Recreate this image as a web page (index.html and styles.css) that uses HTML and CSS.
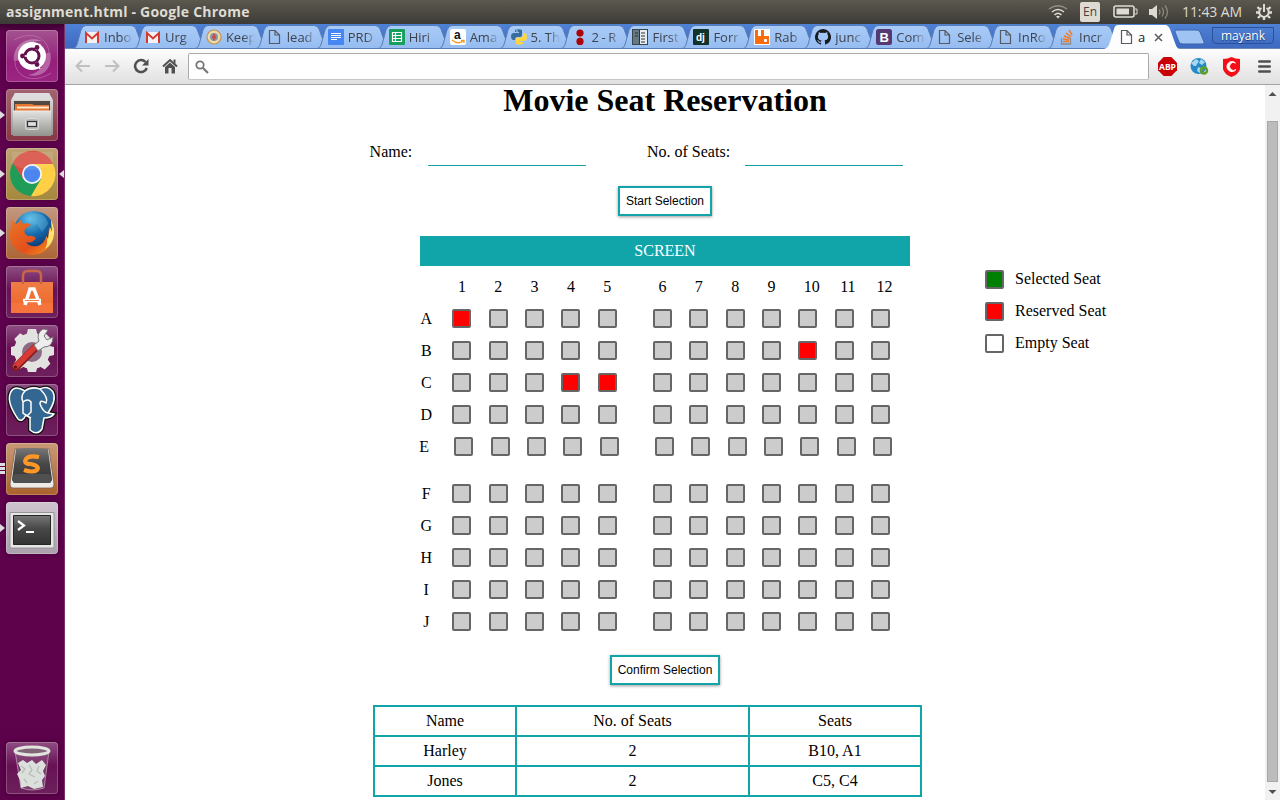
FILE: index.html
```html
<!DOCTYPE html>
<html lang="en">
<head>
<meta charset="utf-8">
<title>assignment.html</title>
<link rel="stylesheet" href="styles.css">
</head>
<body>
<svg class="defs" width="0" height="0">
  <defs>
    <linearGradient id="tabfill" x1="0" y1="0" x2="0" y2="1"><stop offset="0" stop-color="#a9cbf8"/><stop offset="1" stop-color="#96bcf0"/></linearGradient>
    <linearGradient id="metal" x1="0" y1="0" x2="0" y2="1"><stop offset="0" stop-color="#e2e2e0"/><stop offset="1" stop-color="#92928e"/></linearGradient>
    <linearGradient id="dark" x1="0" y1="0" x2="0" y2="1"><stop offset="0" stop-color="#777"/><stop offset=".45" stop-color="#484848"/><stop offset="1" stop-color="#333"/></linearGradient>
    <linearGradient id="bag" x1="0" y1="0" x2="0" y2="1"><stop offset="0" stop-color="#ee7d43"/><stop offset="1" stop-color="#ee642a"/></linearGradient>
    <radialGradient id="fox" cx=".4" cy=".2" r=".8"><stop offset="0" stop-color="#65c4ec"/><stop offset=".5" stop-color="#176bac"/><stop offset="1" stop-color="#0d2c68"/></radialGradient>
    <linearGradient id="flame" x1="0" y1="0" x2="1" y2="1"><stop offset="0" stop-color="#e87428"/><stop offset=".6" stop-color="#e4501a"/><stop offset="1" stop-color="#f39b22"/></linearGradient>
    <symbol id="tab" viewBox="0 0 74 25"><path d="M0 24.5C3 24 3.500 22 4.500 19L8 6Q9.500 1.500 13 1.500H58Q61.500 1.500 63 5L68.500 20Q70 24 73 24.500Z" fill="url(#tabfill)" stroke="#587db5" /></symbol>
    <symbol id="page" viewBox="0 0 16 16"><path d="M2.500 1.500H8L12.500 6V14.500H2.500ZM8 1.500V6H12.500" fill="none" stroke="#565b62" stroke-width="1.200"/></symbol>
    <symbol id="gmail" viewBox="0 0 16 16"><path d="M1 3H15V14H1Z" fill="#f2f2f2"/><path d="M2 14V4L8 9.500L14 4V14" fill="none" stroke="#d43a2f" stroke-width="2"/></symbol>
  </defs>
</svg>
<header class="panel">
  <span class="panel-title">assignment.html - Google Chrome</span>
  <div class="indicators">
    <svg class="wifi" width="20" height="14" viewBox="0 0 20 14" fill="none" stroke="#dfdbd2" stroke-width="1.500"><path d="M1 4Q10-2.500 19 4" stroke="#948f84"/><path d="M4 7Q10 2 16 7M6.500 10Q10 6.500 13.500 10"/><path d="M8 11.500Q10 10 12 11.500L10 13.500Z" fill="#dfdbd2" stroke="none"/></svg>
    <span class="lang">En</span>
    <svg class="battery" width="25" height="14" viewBox="0 0 25 14"><rect x="1" y="1" width="20" height="11" rx="2" fill="none" stroke="#dfdbd2" stroke-width="1.600"/><path d="M3.500 3.500H16V9.500H3.500Z" fill="#dfdbd2"/><path d="M22 4H24V9H22" fill="none" stroke="#dfdbd2"/></svg>
    <svg class="sound" width="20" height="16" viewBox="0 0 20 16"><path d="M0 5H3L8 1V15L3 11H0Z" fill="#dfdbd2"/><path d="M10 5.500Q12 8 10 10.500M13 3.500Q16 8 13 12.500M16 1.500Q21 8 16 14.500" fill="none" stroke="#8d887e" stroke-width="1.300"/></svg>
    <span class="clock">11:43 AM</span>
    <svg class="gear" width="16" height="16" viewBox="0 0 16 16" fill="none" stroke="#dfdbd2"><path d="M5.500 4A4.800 4.800 0 1 0 10.500 4" stroke-width="2"/><path d="M8 0V8" stroke-width="2"/><path d="M3.500 5L1.500 3M3 8.500H0M4 12L2 14M8 13V16M12 12L14 14M13 8.500H16M12.500 5L14.500 3" stroke-width="2.400"/></svg>
  </div>
</header>
<div class="desktop">
  <nav class="launcher">
    <div class="tile ubuntu"><svg viewBox="0 0 52 52"><path d="M8 31C6 15 22 5 36 11C24 10 14 18 15 30M44 22C48 38 36 49 22 45C34 43 41 34 39 24" fill="#fff" opacity=".3"/><path d="M9 31C9 48 28 54 45 43M43 22C41 6 24 1 8 10" fill="none" stroke="#c98bb8" opacity=".5"/><circle cx="26" cy="26" r="14" fill="#fff"/><circle cx="26" cy="26" r="7" fill="none" stroke="#65104e" stroke-width="3"/><g stroke="#fff" stroke-width="1.500"><path d="M14 26H21M30 20L34 14M30 32L34 39"/></g><g fill="#65104e"><circle cx="16.500" cy="26" r="2.400"/><circle cx="31" cy="17.500" r="2.400"/><circle cx="31" cy="34.500" r="2.400"/></g></svg></div>
    <div class="tile files run"><svg viewBox="0 0 52 52"><path d="M9 4H43L47 11V46H5V11Z" fill="url(#metal)"/><path d="M9 4H43L46 11H6Z" fill="#ddd"/><path d="M8 12H44V22H8Z" fill="#514a44"/><path d="M9 15H26L28 16H43V22H9Z" fill="#e57830"/><path d="M11 17.500H43V19.500H11Z" fill="#ffe7cc"/><path d="M7 22H45V47H7Z" fill="url(#metal)"/><path d="M7 22H45" stroke="#eee"/><rect x="19.500" y="29.500" width="13" height="11" rx="2" fill="#b8b8b6" stroke="#dcdcdb"/><rect x="21.500" y="32.500" width="9" height="5" fill="#ddd" stroke="#333" stroke-width="1.200"/></svg></div>
    <div class="tile chrome run active"><svg viewBox="0 0 52 52"><circle cx="26" cy="26" r="22" fill="#1f9d58"/><path d="M26 16H47A22 22 0 0 1 25 48L35 31Z" fill="#ffcf45"/><path d="M7 15L17 31L25 16H47A22 22 0 0 0 7 15Z" fill="#d95044"/><circle cx="26" cy="26" r="10" fill="#f4f4f4"/><circle cx="26" cy="26" r="8.200" fill="#4b86ee"/><path d="M6 15Q22 28 47 16V4H6Z" fill="#fff" opacity=".1"/></svg></div>
    <div class="tile firefox run"><svg viewBox="0 0 52 52"><circle cx="28" cy="24" r="20" fill="url(#fox)"/><path d="M25 7C34 5 41 9 42 17L36 25L31 17L27 18Z" fill="#67b9dc" opacity=".4"/><path d="M6 13L10 17L15 13L17 17Q23 15 25 18L19 22Q17 26 22 29Q27 28 30 31Q26 37 20 35C24 42 38 41 40 29L42 32L43 20L46 25L45 13C52 26 46 47 27 48C11 48 0 35 5 21Z" fill="url(#flame)"/><path d="M40 29L42 32L44 20L46 25L45 13C51 24 48 37 39 42Q43 35 40 29" fill="#ffe36a"/></svg></div>
    <div class="tile store"><svg viewBox="0 0 52 52"><path d="M5 16H47V47H5Z" fill="url(#bag)"/><path d="M17 18V10Q17 5 22 5H31Q35 5 35 10V18" fill="none" stroke="#c86748" stroke-width="2.500"/><path d="M5 37H47V47H5Z" fill="#f4743c"/><path d="M19 39L24 23H28L34 39M17 34.500H35" fill="none" stroke="#fff" stroke-width="3.500"/><path d="M19 34.500H33" stroke="#f37a44"/></svg></div>
    <div class="tile settings"><svg viewBox="0 0 52 52"><g fill="#e2e2e0"><circle cx="26" cy="26" r="18"/><path d="M22 4H30L32 12H20ZM22 47H30L32 40H20Z"/><path d="M22 4H30L32 12H20ZM22 47H30L32 40H20Z" transform="rotate(45 26 26)"/><path d="M22 4H30L32 12H20ZM22 47H30L32 40H20Z" transform="rotate(90 26 26)"/><path d="M22 4H30L32 12H20ZM22 47H30L32 40H20Z" transform="rotate(135 26 26)"/></g><circle cx="26" cy="27" r="10" fill="#8d6b86"/><path d="M10 42L29 23" stroke="#861d20" stroke-width="8" stroke-linecap="round"/><path d="M10 41L29 22" stroke="#d73a32" stroke-width="6" stroke-linecap="round"/><path d="M28 20L33 16Q30 8 37 4L42 5L38 11L41 15L47 12Q47 22 38 22L32 26Z" fill="#eee" stroke="#777"/><circle cx="9.500" cy="42" r="1.600" fill="#5b1015"/></svg></div>
    <div class="tile postgres"><svg viewBox="0 0 52 52"><path d="M19 7Q7 0 4 10Q1 19 12 35Q16 39 20 31L24 34V46Q31 52 36 45L38 34Q45 34 48 30L42 29Q51 16 47 8Q42 1 34 5Q25 2 19 7Z" fill="#336791" stroke="#111" stroke-width="4"/><path d="M19 7Q7 0 4 10Q1 19 12 35Q16 39 20 31L24 34V46Q31 52 36 45L38 34Q45 34 48 30L42 29Q51 16 47 8Q42 1 34 5Q25 2 19 7ZM19 7Q14 12 17 18V29L21 32M17 18Q22 14 25 18V28L21 32L25 34M34 5Q43 14 40 19Q34 15 34 20Q37 28 42 29" fill="#336791" stroke="#fff" stroke-width="1.500"/></svg></div>
    <div class="tile sublime run multi"><svg viewBox="0 0 52 52"><path d="M9 6H43L48 41Q48 45 45 45H7Q4 45 4 41Z" fill="#ece9e7" stroke="#77604f" stroke-width=".8"/><path d="M10 6Q26 4 42 6L46 37L44 40H8L6 37Z" fill="url(#dark)"/><path d="M6 35L9 31H43L46 35L44 40H8Z" fill="#505050"/><path d="M33 14Q23 12 20 16Q17 21 25 21Q34 23 31 27Q27 30 18 27" fill="none" stroke="#ff9826" stroke-width="4.200"/></svg></div>
    <div class="tile terminal run"><svg viewBox="0 0 52 52"><path d="M4 10.500H48V46H4Z" fill="#e7e6e7" stroke="#989398"/><path d="M7.500 13.500H44.500V42.500H7.500Z" fill="url(#dark)" stroke="#252525"/><path d="M12 19L18 23.500L12 28M20 30H28" fill="none" stroke="#fff" stroke-width="2.200"/></svg></div>
    <div class="tile trash"><svg viewBox="0 0 52 52"><path d="M9 9L15 46Q26 50 38 46L43 9" fill="#9d7495" fill-opacity=".35" stroke="#a98aa1"/><path d="M12 21L17 18L21 21L26 18L30 22L36 18L40 23L37 29L39 34L36 38L37 45L28 47L22 44L15 46L14 38L11 32L15 28Z" fill="#dce0dc"/><path d="M15 24L19 27L16 31M23 23L26 28L23 32L29 35M33 24L31 29L35 32M18 37L21 41M32 39L28 42" fill="none" stroke="#b9beb7" stroke-width="1.300"/><ellipse cx="26" cy="9" rx="17" ry="4" fill="#806578" stroke="#e2e4de" stroke-width="3"/></svg></div>
  </nav>
  <div class="browser">
    <div class="tabs">
      <div class="tab"><svg class="shape"><use href="#tab"/></svg><svg class="fav"><use href="#gmail"/></svg><span>Inbo</span></div>
      <div class="tab"><svg class="shape"><use href="#tab"/></svg><svg class="fav"><use href="#gmail"/></svg><span>Urg</span></div>
      <div class="tab"><svg class="shape"><use href="#tab"/></svg><svg class="fav" viewBox="0 0 16 16"><circle cx="8" cy="8" r="7" fill="#eedbab" stroke="#c4924b" stroke-width="1.200"/><circle cx="8" cy="8" r="4" fill="#8796a9"/><path d="M8 4L10 8L8 12L6 8Z" fill="#ce4a40"/></svg><span>Keep</span></div>
      <div class="tab"><svg class="shape"><use href="#tab"/></svg><svg class="fav"><use href="#page"/></svg><span>lead</span></div>
      <div class="tab"><svg class="shape"><use href="#tab"/></svg><svg class="fav" viewBox="0 0 16 16"><rect width="16" height="16" rx="1" fill="#4687f3"/><path d="M3 4.500H13M3 6.500H13M3 8.500H13M3 10.500H9" stroke="#fff"/></svg><span>PRD</span></div>
      <div class="tab"><svg class="shape"><use href="#tab"/></svg><svg class="fav" viewBox="0 0 16 16"><rect width="16" height="16" rx="1" fill="#16a05c"/><path d="M3.500 3.500H12.500V12.500H3.500ZM3.500 6.500H12.500M3.500 9.500H12.500M6.500 3.500V12.500" fill="none" stroke="#fff" stroke-width="1.200"/></svg><span>Hiri</span></div>
      <div class="tab"><svg class="shape"><use href="#tab"/></svg><svg class="fav" viewBox="0 0 16 16"><rect width="16" height="16" rx="2" fill="#fff"/><text x="4" y="10" class="amazon">a</text><path d="M2 11Q8 16 13 12M11 11.500H14V14" fill="none" stroke="#f49b20" stroke-width="1.300"/></svg><span>Ama</span></div>
      <div class="tab"><svg class="shape"><use href="#tab"/></svg><svg class="fav" viewBox="0 0 16 16"><path d="M4 1Q8-.5 11 1V6Q11 8 9 8H6Q4 8 4 11H2Q0 10 0 7.500Q0 4 3 4H8V3H4Z" fill="#366f9f"/><path d="M12 4H14Q16 5 16 8Q16 12 13 12H8V13H12V15Q8 16.500 5 15V10Q5 8.500 7 8.500H10Q12 8 12 6Z" fill="#ffd540"/><circle cx="6" cy="2" r=".7" fill="#fff"/></svg><span>5. Th</span></div>
      <div class="tab"><svg class="shape"><use href="#tab"/></svg><svg class="fav" viewBox="0 0 16 16"><path d="M8 4V12" stroke="#c78c9f" stroke-width="2"/><circle cx="8" cy="4" r="3.600" fill="#aa0308"/><circle cx="8" cy="12.400" r="3.600" fill="#aa0308"/></svg><span class="tight">2 - R</span></div>
      <div class="tab"><svg class="shape"><use href="#tab"/></svg><svg class="fav" viewBox="0 0 16 16"><rect x=".5" y=".5" width="15" height="15" fill="#657982" stroke="#39464c"/><path d="M8 1H15V15H8Z" fill="#e8edef"/><path d="M3 4H6M3 7H6M9 4H13M9 7H13M9 10H13M9 13H13" stroke="#26343b" stroke-width="1.200"/><path d="M7.500 1V15" stroke="#263238"/></svg><span>First</span></div>
      <div class="tab"><svg class="shape"><use href="#tab"/></svg><svg class="fav" viewBox="0 0 16 16"><rect width="16" height="16" rx="1" fill="#10332b"/><text x="3" y="11.500" class="django">dj</text></svg><span>Forr</span></div>
      <div class="tab"><svg class="shape"><use href="#tab"/></svg><svg class="fav" viewBox="0 0 16 16"><rect width="16" height="16" fill="#fff"/><path d="M1 1H4V7H7V1H10V7H15V15H1Z" fill="#f96b0b"/><rect x="10" y="10" width="3" height="3" rx="1" fill="#fff"/></svg><span>Rab</span></div>
      <div class="tab"><svg class="shape"><use href="#tab"/></svg><svg class="fav" viewBox="0 0 16 16"><path fill="#171c22" d="M8 0a8 8 0 0 0-2.530 15.590c.4.070.55-.170.55-.380V13.700c-2.230.480-2.700-1.070-2.700-1.070-.360-.920-.890-1.170-.890-1.170-.730-.5.050-.490.050-.490.810.060 1.230.830 1.230.830.720 1.230 1.880.870 2.340.670.070-.520.280-.870.510-1.070C4.780 11.200 2.920 10.500 2.920 7.440c0-.870.310-1.590.820-2.150-.080-.2-.360-1.020.080-2.120 0 0 .670-.220 2.200.820a7.600 7.600 0 0 1 4 0c1.530-1.040 2.200-.820 2.200-.820.440 1.100.160 1.920.080 2.120.510.560.820 1.280.820 2.150 0 3.070-1.870 3.750-3.650 3.950.290.250.540.730.540 1.480v2.340c0 .210.150.460.550.380A8 8 0 0 0 8 0Z"/></svg><span>junc</span></div>
      <div class="tab"><svg class="shape"><use href="#tab"/></svg><svg class="fav" viewBox="0 0 16 16"><rect width="16" height="16" rx="2.500" fill="#563873"/><text x="3.500" y="12.500" class="bootstrap">B</text></svg><span>Com</span></div>
      <div class="tab"><svg class="shape"><use href="#tab"/></svg><svg class="fav"><use href="#page"/></svg><span>Sele</span></div>
      <div class="tab"><svg class="shape"><use href="#tab"/></svg><svg class="fav"><use href="#page"/></svg><span>InRo</span></div>
      <div class="tab"><svg class="shape"><use href="#tab"/></svg><svg class="fav" viewBox="0 0 16 16"><path d="M2.500 9V15H11.500V9" fill="none" stroke="#8b8d90" stroke-width="1.300"/><path d="M4 12.500H10M4 10L10 11M5 7L11 9.500M7 4L12 8M10 1L13 6" stroke="#f17b27" stroke-width="1.500"/></svg><span>Incr</span></div>
      <div class="tab current"><svg class="shape" viewBox="0 0 76 25"><path d="M0 25C4 24 5 21 6 18L10 5Q11 1 14 1H61Q64 1 66 5L71 19Q73 25 76 25Z" fill="#fdfdfe"/></svg><svg class="fav"><use href="#page"/></svg><span>a</span><svg class="close" viewBox="0 0 9 9"><path d="M1 1L8 8M8 1L1 8" stroke="#5d5d5d" stroke-width="1.500"/></svg></div>
      <svg class="newtab" viewBox="0 0 32 16"><path d="M1 3Q0 1 3 1H22Q25 1 26 3L30 13Q31 15 28 15H9Q6 15 5 13Z" fill="#9fc4f3" stroke="#3c65ac"/></svg>
      <div class="profile">mayank</div>
    </div>
    <div class="toolbar">
      <svg class="nav-icon" viewBox="0 0 16 16"><path d="M15 8H2M7 2.500L1.500 8L7 13.500" fill="none" stroke="#c0c0c0" stroke-width="2"/></svg>
      <svg class="nav-icon" viewBox="0 0 16 16"><path d="M1 8H14M9 2.500L14.500 8L9 13.500" fill="none" stroke="#c0c0c0" stroke-width="2"/></svg>
      <svg class="nav-icon" viewBox="0 0 16 16"><path d="M12.500 4A6 6 0 1 0 13.800 10" fill="none" stroke="#505050" stroke-width="2.500"/><path d="M15.500 1V7.500H9Z" fill="#505050"/></svg>
      <svg class="nav-icon" viewBox="0 0 16 16"><path d="M1 8.500L8 2L15 8.500" fill="none" stroke="#505050" stroke-width="2"/><path d="M11.500 1.500H13.500V6L11.500 4ZM3 9L8 4.500L13 9V15.500H9.500V10H6.500V15.500H3Z" fill="#505050"/></svg>
      <div class="omnibox"><svg viewBox="0 0 14 14"><circle cx="5" cy="5" r="3.700" fill="none" stroke="#777" stroke-width="1.800"/><path d="M8 8L13 13" stroke="#777" stroke-width="2.200"/></svg></div>
      <div class="extensions">
        <svg class="abp" viewBox="0 0 20 20"><path d="M6 0H14L20 6V14L14 20H6L0 14V6Z" fill="#c90006"/><text x="10" y="13.200" class="abp-text">ABP</text></svg>
        <svg class="globe" viewBox="0 0 19 17"><circle cx="8.500" cy="8" r="8" fill="#2689c7"/><path d="M1 5L6 1L9 3L6 8L4 8ZM8 9L13 11L10 15L7 13ZM11 1L15 4L12 7L9 5Z" fill="#a4d8f0"/><circle cx="14" cy="12.500" r="3" fill="none" stroke="#5f9e24" stroke-width="2.500"/><path d="M10 9H14V13Z" fill="#5f9e24"/></svg>
        <svg class="shield" viewBox="0 0 17 20"><path d="M0 2Q5 2 8.500 0Q12 2 17 2V12Q16 17 8.500 20Q1 17 0 12Z" fill="#f50e16"/><path d="M12.500 6A5 5 0 1 0 13 12.500A4 4 0 1 1 12.500 6" fill="#fff" stroke="#fff" stroke-width="1"/></svg>
        <svg class="menu" viewBox="0 0 13 13"><path d="M1.200 1.500H11.800M1.200 6.500H11.800M1.200 11.500H11.800" stroke="#505050" stroke-width="2.400" stroke-linecap="round"/></svg>
      </div>
    </div>
    <div class="viewport">
      <main>
        <h1>Movie Seat Reservation</h1>
        <div class="form"><label class="name">Name:</label><span class="field"></span><label class="count">No. of Seats:</label><span class="field"></span></div>
        <div class="button start">Start Selection</div>
        <div class="hall">
          <div class="seating">
            <div class="screen">SCREEN</div>
            <div class="row numbers"><b></b><span>1</span><span>2</span><span>3</span><span>4</span><span>5</span><em></em><span>6</span><span>7</span><span>8</span><span>9</span><span>10</span><span>11</span><span>12</span></div>
            <div class="row"><b>A</b><i class="reserved"></i><i></i><i></i><i></i><i></i><em></em><i></i><i></i><i></i><i></i><i></i><i></i><i></i></div>
            <div class="row"><b>B</b><i></i><i></i><i></i><i></i><i></i><em></em><i></i><i></i><i></i><i></i><i class="reserved"></i><i></i><i></i></div>
            <div class="row"><b>C</b><i></i><i></i><i></i><i class="reserved"></i><i class="reserved"></i><em></em><i></i><i></i><i></i><i></i><i></i><i></i><i></i></div>
            <div class="row"><b>D</b><i></i><i></i><i></i><i></i><i></i><em></em><i></i><i></i><i></i><i></i><i></i><i></i><i></i></div>
            <div class="row wide"><b>E</b><i></i><i></i><i></i><i></i><i></i><em></em><i></i><i></i><i></i><i></i><i></i><i></i><i></i></div>
            <div class="row"><b>F</b><i></i><i></i><i></i><i></i><i></i><em></em><i></i><i></i><i></i><i></i><i></i><i></i><i></i></div>
            <div class="row"><b>G</b><i></i><i></i><i></i><i></i><i></i><em></em><i></i><i></i><i></i><i></i><i></i><i></i><i></i></div>
            <div class="row"><b>H</b><i></i><i></i><i></i><i></i><i></i><em></em><i></i><i></i><i></i><i></i><i></i><i></i><i></i></div>
            <div class="row"><b>I</b><i></i><i></i><i></i><i></i><i></i><em></em><i></i><i></i><i></i><i></i><i></i><i></i><i></i></div>
            <div class="row"><b>J</b><i></i><i></i><i></i><i></i><i></i><em></em><i></i><i></i><i></i><i></i><i></i><i></i><i></i></div>
          </div>
          <div class="legend">
            <div><i class="selected"></i>Selected Seat</div>
            <div><i class="reserved"></i>Reserved Seat</div>
            <div><i class="empty"></i>Empty Seat</div>
          </div>
        </div>
        <div class="button confirm">Confirm Selection</div>
        <table class="bookings">
          <tr><td class="c1">Name</td><td class="c2">No. of Seats</td><td class="c3">Seats</td></tr>
          <tr><td>Harley</td><td>2</td><td>B10, A1</td></tr>
          <tr><td>Jones</td><td>2</td><td>C5, C4</td></tr>
        </table>
      </main>
      <div class="scrollbar"><svg width="9" height="5" viewBox="0 0 9 5"><path d="M.5 5L4.500 1L8.500 5Z" fill="#505050"/></svg><div class="thumb"></div><svg width="9" height="5" viewBox="0 0 9 5"><path d="M.5 1L4.500 5L8.500 1Z" fill="#505050"/></svg></div>
    </div>
  </div>
</div>
</body>
</html>
```

FILE: styles.css
```css
* { box-sizing: border-box; }
body { margin: 0; width: 1280px; height: 800px; overflow: hidden; background: #fff; font-family: "Open Sans", "Noto Sans", sans-serif; }
svg { display: block; flex: none; }
.defs { position: absolute; }

.panel { height: 24px; display: flex; justify-content: space-between; align-items: center; padding: 0 8px 0 6px; background: linear-gradient(#5b584e, #3c3b37); color: #dfdbd2; }
.panel-title { font-size: 14px; font-weight: 700; line-height: 24px; letter-spacing: 0.22px; white-space: nowrap; }
.indicators { display: flex; align-items: center; font-size: 14px; line-height: 24px; }
.lang { width: 20px; height: 20px; margin-left: 12px; border-radius: 2px; background: #dfdbd2; color: #45433d; font-size: 12px; line-height: 20px; text-align: center; }
.battery { margin-left: 13px; }
.sound { margin-left: 11px; }
.clock { width: 61px; margin-left: 13px; white-space: nowrap; letter-spacing: -0.1px; }
.gear { margin-left: 13px; }

.desktop { display: flex; height: 776px; }
.launcher { width: 65px; flex: none; display: flex; flex-direction: column; gap: 7px; padding: 6px; background: linear-gradient(#3c0030, #61024f 8px, #5c024a); border-right: 1px solid #7a3069; }
.tile { position: relative; width: 52px; height: 52px; flex: none; border-radius: 4px; background: linear-gradient(#8e4e82, #681155 45%, #6d205c); box-shadow: inset 0 0 0 1px #ffffff38, 0 0 4px #22001b70; }
.tile svg { width: 52px; height: 52px; }
.ubuntu { background: linear-gradient(#a3538f, #961f7c 60%, #9b2582); }
.files { background: linear-gradient(#a26572, #873644); }
.chrome { background: linear-gradient(#c0a276, #a6873b); }
.firefox { background: linear-gradient(#c39881, #ac6435); }
.sublime { background: linear-gradient(#c99977, #aa622c); }
.terminal { background: linear-gradient(#cfc5cf, #aaa0ac); }
.trash { margin-top: auto; }
.run::before { content: ""; position: absolute; left: -6px; top: 22px; border: 4px solid transparent; border-left: 5px solid #ddd; border-right: 0; }
.active::after { content: ""; position: absolute; right: -6px; top: 22px; border: 4px solid transparent; border-right: 5px solid #ddd; border-left: 0; }
.multi::before { width: 5px; height: 11px; top: 20px; border: 0; background: repeating-linear-gradient(#ddd 0 3px, transparent 3px 4px); }

.browser { width: 1215px; display: flex; flex-direction: column; }
.tabs { height: 25px; display: flex; padding-left: 8px; background: linear-gradient(#4e82d6, #3e69c0); border-bottom: 1px solid #6d8cb9; font-size: 13px; }
.tab { position: relative; width: 60.95px; height: 25px; flex: none; display: flex; padding: 5px 0 0 11px; color: #3f444c; }
.tab > * { position: relative; }
.tab .shape { position: absolute; left: 0; top: 0; width: 74px; height: 25px; }
.fav { width: 16px; height: 16px; z-index: 2; }
.tab span { z-index: 2; width: 29px; margin-left: 4px; white-space: nowrap; line-height: 17px; height: 18px; -webkit-mask-image: linear-gradient(90deg, #000 60%, transparent); mask-image: linear-gradient(90deg, #000 60%, transparent); }
.tab .tight { letter-spacing: -0.4px; }
.tab.current { z-index: 3; width: 67px; padding-left: 10px; color: #222; }
.current .shape { left: -5px; width: 76px; }
.tab.current span { width: 12px; margin-left: 3px; mask-image: none; -webkit-mask-image: none; }
.current .close { width: 9px; height: 9px; margin: 4px 0 0 4px; }
.newtab { width: 32px; height: 16px; margin: 5px 0 0 -2px; }
.profile { width: 62px; height: 17px; margin: 3px 0 0 6px; border: 1px solid #2c4f9c; border-radius: 0 0 4px 4px; color: #fff; font-size: 12px; line-height: 15px; text-align: center; text-shadow: 0 1px 1px #17376d; }
.amazon { font: bold 12px "Liberation Sans", sans-serif; fill: #111; }
.django { font: bold 10px "Liberation Sans", sans-serif; fill: #fff; }
.bootstrap { font: bold 13px "Liberation Sans", sans-serif; fill: #fff; }

.toolbar { height: 36px; display: flex; align-items: center; gap: 13px; padding: 0 9px 0 10px; background: linear-gradient(#fdfdfe, #e0e0e0); border-bottom: 1px solid #a4a4a4; }
.nav-icon { width: 16px; height: 16px; margin-top: -1px; }
.omnibox { width: 961px; height: 27px; flex: none; margin-left: -3px; display: flex; align-items: center; padding-left: 6px; background: #fff; border: 1px solid #aaa; border-bottom-color: #c5c5c5; border-radius: 2px; }
.omnibox svg { width: 14px; height: 14px; }
.extensions { display: flex; align-items: center; margin-left: -4px; }
.abp { width: 19px; height: 19px; }
.abp-text { font: bold 9px "Open Sans", sans-serif; fill: #fff; text-anchor: middle; }
.globe { width: 19px; height: 17px; margin-left: 13px; }
.shield { width: 17px; height: 20px; margin-left: 14px; }
.menu { width: 13px; height: 13px; margin-left: 18px; }

.viewport { display: flex; height: 715px; background: #fff; }
main { width: 1200px; height: 715px; flex: none; font: 16px/18px "Liberation Serif", serif; color: #000; }
h1 { margin: 0; height: 31px; font-size: 32px; line-height: 30px; text-align: center; }
.form { display: flex; height: 30px; margin: 20px 0; padding-left: 304.600px; }
.form label { line-height: 32px; white-space: nowrap; }
.name { width: 58.400px; }
.count { width: 98px; margin-left: 61px; }
.field { width: 158px; height: 30px; border-bottom: 1px solid #17a2a6; }
.button { height: 30px; margin: 0 auto; border: 2px solid #12a4a9; box-shadow: 0 1px 3px #0006; font: 12px/26px "Liberation Sans", sans-serif; text-align: center; white-space: nowrap; }
.start { width: 94px; }
.confirm { width: 110px; }
.hall { display: flex; gap: 75px; margin: 20px 0 19px 355px; height: 400px; }
.seating { width: 490px; }
.screen { height: 30px; background: #11a5aa; color: #fff; text-align: center; line-height: 30px; margin-bottom: 5px; }
.row { display: grid; grid-template-columns: 32.300px repeat(5, 36.330px) 19px repeat(7, 36.330px); height: 32px; align-items: center; }
.row b { width: 12.500px; font-weight: 400; text-align: center; }
.row span { padding-left: 5.600px; }
.row i, .legend i { width: 19px; height: 19px; border: 2px solid #666; border-radius: 2px; background: #ccc; }
.row i { margin-bottom: 2px; }
.row i.reserved, .legend .reserved { background: #f00; }
.wide { grid-template-columns: 34.300px repeat(5, 36.330px) 19px repeat(7, 36.330px); margin-bottom: 15px; }
.wide b { margin-left: -2.200px; }
.legend { padding-top: 27px; }
.legend div { display: flex; align-items: center; height: 32px; white-space: nowrap; }
.legend i { margin-right: 11px; }
.legend .selected { background: #008000; }
.legend .empty { background: #fff; }
.bookings { width: 549px; margin: 20px 0 0 308px; border-collapse: collapse; table-layout: fixed; }
.bookings td { height: 30px; padding: 0; border: 2px solid #11a5aa; text-align: center; }
.c1 { width: 142px; }
.c2 { width: 233px; }
.c3 { width: 172px; }

.scrollbar { width: 15px; height: 715px; flex: none; display: flex; flex-direction: column; align-items: center; padding: 6px 0; background: #f1f1f1; }
.thumb { width: 11px; height: 661px; margin: 25px 0 auto; background: #bcbcbc; border: 1px solid #a8a8a8; }
```
